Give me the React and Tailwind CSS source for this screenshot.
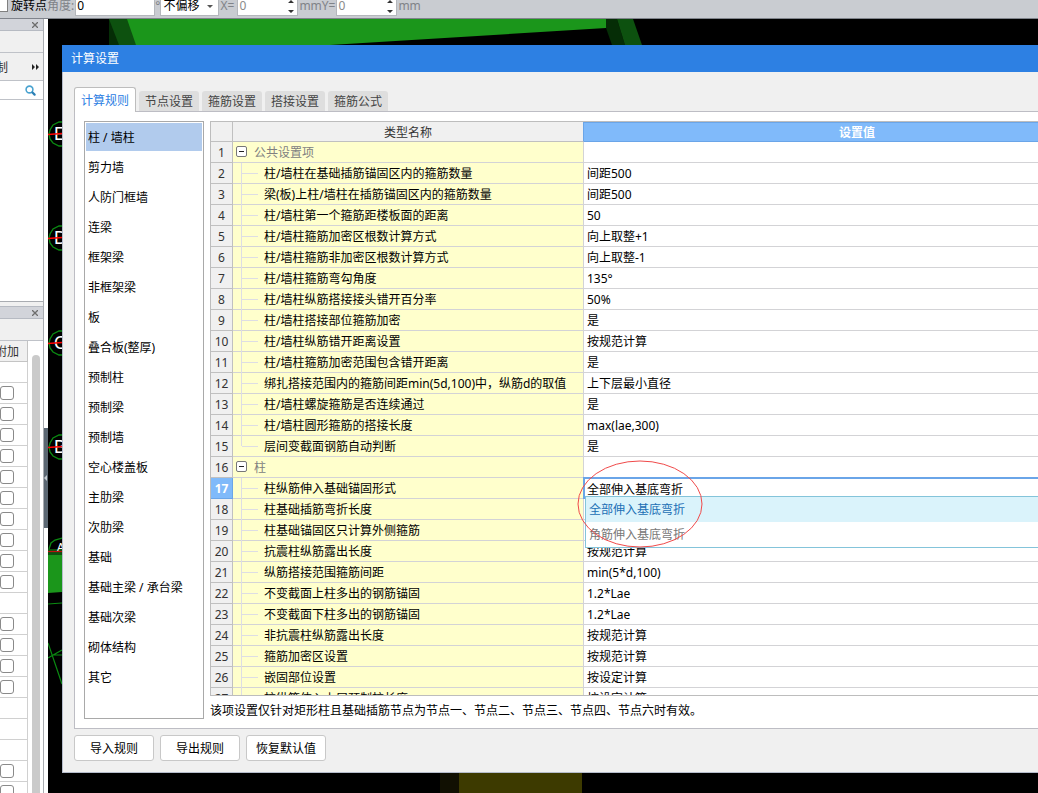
import React from "react";

const tabs = ["计算规则", "节点设置", "箍筋设置", "搭接设置", "箍筋公式"];

const members = [
  "柱 / 墙柱", "剪力墙", "人防门框墙", "连梁", "框架梁", "非框架梁", "板",
  "叠合板(整厚)", "预制柱", "预制梁", "预制墙", "空心楼盖板", "主肋梁", "次肋梁",
  "基础", "基础主梁 / 承台梁", "基础次梁", "砌体结构", "其它",
];

const rows = [
  { group: "公共设置项" },
  { name: "柱/墙柱在基础插筋锚固区内的箍筋数量", value: "间距500" },
  { name: "梁(板)上柱/墙柱在插筋锚固区内的箍筋数量", value: "间距500" },
  { name: "柱/墙柱第一个箍筋距楼板面的距离", value: "50" },
  { name: "柱/墙柱箍筋加密区根数计算方式", value: "向上取整+1" },
  { name: "柱/墙柱箍筋非加密区根数计算方式", value: "向上取整-1" },
  { name: "柱/墙柱箍筋弯勾角度", value: "135°" },
  { name: "柱/墙柱纵筋搭接接头错开百分率", value: "50%" },
  { name: "柱/墙柱搭接部位箍筋加密", value: "是" },
  { name: "柱/墙柱纵筋错开距离设置", value: "按规范计算" },
  { name: "柱/墙柱箍筋加密范围包含错开距离", value: "是" },
  { name: "绑扎搭接范围内的箍筋间距min(5d,100)中，纵筋d的取值", value: "上下层最小直径" },
  { name: "柱/墙柱螺旋箍筋是否连续通过", value: "是" },
  { name: "柱/墙柱圆形箍筋的搭接长度", value: "max(lae,300)" },
  { name: "层间变截面钢筋自动判断", value: "是", last: true },
  { group: "柱" },
  { name: "柱纵筋伸入基础锚固形式", value: "全部伸入基底弯折", editing: true },
  { name: "柱基础插筋弯折长度", value: "" },
  { name: "柱基础锚固区只计算外侧箍筋", value: "" },
  { name: "抗震柱纵筋露出长度", value: "按规范计算" },
  { name: "纵筋搭接范围箍筋间距", value: "min(5*d,100)" },
  { name: "不变截面上柱多出的钢筋锚固", value: "1.2*Lae" },
  { name: "不变截面下柱多出的钢筋锚固", value: "1.2*Lae" },
  { name: "非抗震柱纵筋露出长度", value: "按规范计算" },
  { name: "箍筋加密区设置", value: "按规范计算" },
  { name: "嵌固部位设置", value: "按设定计算" },
  { name: "柱纵筋伸入上层预制柱长度", value: "按设定计算" },
];

const attributeRows = [0, 1, 1, 1, 1, 1, 1, 1, 1, 1, 1, 0, 1, 1, 1, 1, 0, 0, 0, 1, 1];

function Spin({ label }) {
  return (
    <div className="flex h-5 w-[61px] border border-[#b4b7bc] bg-white">
      <input aria-label={label} defaultValue="0" className="w-0 flex-1 px-px text-[#8a8a8a] outline-none" />
      <svg className="h-full w-3" viewBox="0 0 12 18" fill="#333">
        <path d="M3 6h6L6 3zM3 13h6l-3 3z" />
      </svg>
    </div>
  );
}

function Toolbar() {
  return (
    <header className="flex h-[19px] shrink-0 items-end overflow-hidden border-b border-[#7f838b] bg-[#c9ccd1] pb-[2px] leading-5 text-[#808388]">
      <label className="flex items-end text-black">
        <input type="checkbox" className="mr-[3px] mb-1 -ml-[6px] size-[14px] appearance-none border border-[#808080] bg-white" />
        旋转点
      </label>
      <label className="flex items-end">
        角度:
        <input defaultValue="0" className="ml-px h-5 w-20 border border-[#b4b7bc] bg-white px-px text-black outline-none" />
      </label>
      <span>°</span>
      <div className="relative h-5 w-[59px]">
        <select aria-label="偏移方式" className="h-full w-full appearance-none border border-[#b4b7bc] bg-white pl-[2px] leading-[18px] text-black">
          <option>不偏移</option>
        </select>
        <svg className="pointer-events-none absolute top-[9px] right-[5px] h-1 w-[7px]" viewBox="0 0 7 4" fill="#555">
          <path d="M0 0h6L3 3z" />
        </svg>
      </div>
      <span className="w-[18px] pl-px">X=</span>
      <Spin label="X" />
      <span className="w-[38px] pl-px">mmY=</span>
      <Spin label="Y" />
      <span className="pl-px">mm</span>
    </header>
  );
}

function PanelBar({ label }) {
  return (
    <div className="flex h-3 shrink-0 items-center justify-end border-b border-[#b6bac2] bg-[#d2d4da] pr-[5px]">
      <button aria-label={label}>
        <svg className="size-[6px]" viewBox="0 0 6 6" stroke="#6d6d6d" strokeWidth="1.3">
          <path d="M0 0l6 6M6 0L0 6" />
        </svg>
      </button>
    </div>
  );
}

function SidePanels() {
  return (
    <aside className="flex w-12 shrink-0 bg-white">
      <div className="flex w-11 flex-col overflow-hidden border-r border-[#a9acb1] bg-[#f0f0f0]">
        <PanelBar label="关闭构件列表" />
        <div className="h-[22px] shrink-0 border-b border-[#bfc2c8]" />
        <div className="flex h-7 shrink-0 items-center justify-between border-b border-[#bfc2c8] pr-[3px] text-[#333]">
          <button className="-ml-1 pt-[2px]">制</button>
          <button aria-label="更多">
            <svg className="h-[6px] w-2" viewBox="0 0 8 6" fill="#222">
              <path d="M0 0l3 3-3 3zM4 0l3 3-3 3z" />
            </svg>
          </button>
        </div>
        <div className="flex h-[19px] shrink-0 items-center justify-end border-b border-[#bfc2c8] bg-white pr-[7px]">
          <button aria-label="搜索">
            <svg className="size-[11px]" viewBox="0 0 11 11" fill="none" strokeLinecap="round">
              <circle cx="4.5" cy="4.5" r="3.4" stroke="#4aa3d0" strokeWidth="1.6" />
              <path d="M7.5 7.5L9.6 9.6" stroke="#2a7fb5" strokeWidth="2.2" />
            </svg>
          </button>
        </div>
        <div className="h-[202px] shrink-0 border-b border-[#a9acb1] bg-white" />
        <div className="h-[5px] shrink-0 border-b border-[#b6bac2]" />
        <PanelBar label="关闭属性列表" />
        <div className="h-[22px] shrink-0 border-b border-[#bfc2c8]" />
        <div className="flex min-h-0 flex-1 bg-white">
          <table className="h-fit w-7 table-fixed border-separate border-spacing-0">
            <thead>
              <tr>
                <th className="h-[21px] border-r border-b border-[#c4c4c4] bg-[#f0f0f0] p-0 pt-[2px] leading-[18px] font-normal text-[#333]">
                  <div className="flex justify-end overflow-hidden pr-2 whitespace-nowrap">附加</div>
                </th>
              </tr>
            </thead>
            <tbody>
              {attributeRows.map((box, i) => (
                <tr key={i}>
                  <td className="h-[21px] border-r border-b border-[#d0d0d0] p-0">
                    {box ? (
                      <input
                        type="checkbox"
                        aria-label={`附加 ${i + 1}`}
                        className="block size-[14px] appearance-none rounded-[3px] border border-[#8a8a8a] bg-white"
                      />
                    ) : null}
                  </td>
                </tr>
              ))}
            </tbody>
          </table>
          <div className="mt-[14px] ml-1 w-2 rounded-t bg-[#cacaca]" />
        </div>
      </div>
      <button aria-label="收起面板" className="mt-[409px] flex h-[100px] w-1 items-center bg-[#5b6772]">
        <svg className="h-[6px] w-[3px]" viewBox="0 0 3 6" fill="#c5ccd2">
          <path d="M3 0v6L0 3z" />
        </svg>
      </button>
    </aside>
  );
}

function Axis({ y, letter }) {
  return (
    <g>
      <path
        d={`M62 ${y - 12}L59 ${y - 12}L53 ${y - 9}L50 ${y - 4}L49 ${y}L50 ${y + 5}L53 ${y + 9}L59 ${y + 12}L62 ${y + 12}`}
        fill="none"
        stroke="#0b8a12"
        strokeWidth="1.3"
      />
      <text x="54" y={y + 6} fontSize="18" fill="#fff" fontFamily="Liberation Sans, sans-serif">{letter}</text>
      <path d={`M48 ${y + 0.5}L62 ${y - 0.5}`} stroke="#f00" strokeWidth="1.5" />
    </g>
  );
}

function ModelView() {
  return (
    <main className="min-w-0 flex-1 overflow-hidden bg-black">
      <svg width="990" height="774" viewBox="48 19 990 774" aria-hidden="true">
        <path d="M109 19h20v26h-20z" fill="#052d06" />
        <path d="M109 19h19l9 26h-18z" fill="#0d510f" />
        <path d="M127 19h479v9L330 45H136z" fill="#1b961b" />
        <path d="M606 19h11l8 26h-13l-6-17z" fill="#052d06" />
        <path d="M617 19h16l9 26h-17z" fill="#0d510f" />
        <Axis y={134} letter="E" />
        <Axis y={238} letter="D" />
        <Axis y={343} letter="C" />
        <Axis y={447} letter="B" />
        <path d="M48 549h14v6H48z" fill="#0d510f" />
        <path d="M49 549l2-6 4-3 7-2" fill="none" stroke="#0b8a12" strokeWidth="1.3" />
        <text x="57" y="551" fontSize="11" fill="#fff" fontFamily="Liberation Sans, sans-serif">A</text>
        <path d="M48 551.5h14" stroke="#c01010" strokeWidth="1.2" />
        <path d="M48 555h14v37l-14 1z" fill="#1b961b" />
        <path d="M48 604l14-1M48 643l14 41M48 658l14-8M52 655h10" fill="none" stroke="#0b8a12" strokeWidth="1.2" />
        <path d="M440 773h19v20h-19z" fill="#111002" />
        <path d="M459 773h123v20H459z" fill="#3d3a00" />
      </svg>
    </main>
  );
}

function ValueEditor({ value }) {
  return (
    <div className="relative -mt-px -ml-px h-[22px] border-t-2 border-l-2 border-[#6aa5e8] bg-white">
      <input
        role="combobox"
        aria-label="柱纵筋伸入基础锚固形式"
        aria-expanded="true"
        aria-controls="anchor-options"
        defaultValue={value}
        className="block h-[19px] w-full px-[2px] outline-none"
      />
      <ul
        id="anchor-options"
        role="listbox"
        className="absolute top-[17px] right-0 left-0 z-10 border border-[#84c4da] bg-white leading-[25px]"
      >
        <li role="option" aria-selected="true" className="bg-[#daf3fb] pl-[3px] text-[#1a6fb5]">全部伸入基底弯折</li>
        <li role="option" aria-selected="false" className="pl-[3px] text-[#777]">角筋伸入基底弯折</li>
      </ul>
      <svg className="pointer-events-none absolute -top-[19px] -left-[8px] z-20" width="126" height="88" viewBox="0 0 126 88" fill="none" stroke="#f04a4a">
        <ellipse cx="63" cy="44" rx="62" ry="43" />
      </svg>
    </div>
  );
}

function RulesTable() {
  return (
    <div className="min-h-0 flex-1 overflow-hidden border border-[#bdbdbd]">
      <table className="w-full table-fixed border-separate border-spacing-0 leading-[18px]">
        <colgroup>
          <col className="w-[22px]" />
          <col className="w-[351px]" />
          <col />
        </colgroup>
        <thead>
          <tr className="h-5 leading-[17px] text-[#333]">
            <th aria-label="序号" className="border-r border-b border-[#c0c0c0] bg-[#f0f0f0] p-0" />
            <th className="border-r border-b border-r-[#6aa5e8] border-b-[#c0c0c0] bg-[#f0f0f0] p-0 pt-[2px] font-normal">类型名称</th>
            <th className="border-y border-[#6aa5e8] bg-[#80bafa] p-0 pt-[2px] leading-4 font-bold text-white">设置值</th>
          </tr>
        </thead>
        <tbody>
          {rows.map((r, i) => (
            <tr key={i} className="h-[21px]">
              <th
                className={
                  r.editing
                    ? "border-r border-b border-[#6aa5e8] bg-[#80bafa] p-0 pt-[2px] font-bold text-white"
                    : "border-r border-b border-[#c0c0c0] bg-[#f0f0f0] p-0 pt-[2px] font-normal text-[#333]"
                }
              >
                {i + 1}
              </th>
              <td className="border-r border-b border-[#d3d3d6] bg-[#ffffcc] p-0 whitespace-nowrap">
                {r.group ? (
                  <div className="flex h-5 items-center pl-[3px] text-[#808080]">
                    <button aria-label={`折叠 ${r.group}`} className="mb-px flex size-[11px] items-center justify-center rounded-[2px] border border-[#777] bg-white">
                      <span className="h-px w-[5px] bg-[#222]" />
                    </button>
                    <span className="ml-[7px] pt-[2px]">{r.group}</span>
                  </div>
                ) : (
                  <div className="flex h-5 items-center pl-2">
                    <span className={r.last ? "h-[10px] w-px self-start bg-[#dddde4]" : "-mb-px h-[21px] w-px self-start bg-[#dddde4]"} />
                    <span className="h-px w-4 bg-[#dddde4]" />
                    <span className="ml-[6px] pt-[2px]">{r.name}</span>
                  </div>
                )}
              </td>
              <td className={r.editing ? "h-[21px] p-0 align-top" : "border-b border-[#d3d3d6] p-0 pt-[2px] pl-[3px]"}>
                {r.editing ? <ValueEditor value={r.value} /> : r.value}
              </td>
            </tr>
          ))}
        </tbody>
      </table>
    </div>
  );
}

function SettingsDialog() {
  return (
    <section
      role="dialog"
      aria-label="计算设置"
      className="absolute top-[45px] -right-[114px] bottom-5 left-[62px] flex flex-col border-b border-l border-[#b5bccb] bg-[#f0f0f0]"
    >
      <h1 className="-ml-px h-[27px] shrink-0 bg-[#2d80e3] pl-[9px] leading-[27px] text-white">计算设置</h1>
      <div className="flex min-h-0 flex-1 flex-col px-[11px] pt-[15px] pb-[11px]">
        <div role="tablist" className="z-10 -mb-px flex items-end gap-[3px]">
          {tabs.map((t, i) => (
            <button
              key={t}
              role="tab"
              aria-selected={i === 0}
              className={
                i === 0
                  ? "h-[25px] w-[62px] rounded-t-[3px] border border-b-0 border-[#bdbdbd] bg-white pt-[2px] text-[#2d80e3]"
                  : "mb-px h-5 w-[60px] rounded-t-[3px] bg-[#dedede] pt-[2px] text-[#444]"
              }
            >
              {t}
            </button>
          ))}
        </div>
        <div className="flex min-h-0 flex-1 gap-[6px] border border-[#bdbdc4] bg-white px-[9px] pt-[9px] pb-[9px]">
          <nav className="flex w-[120px] shrink-0 flex-col gap-[2px] border border-[#a9a9a9] p-px">
            {members.map((m, i) => (
              <button
                key={m}
                className={i === 0 ? "h-7 shrink-0 bg-[#b1cbed] pt-[2px] pl-[2px] text-left" : "h-7 shrink-0 pt-[2px] pl-[2px] text-left"}
              >
                {m}
              </button>
            ))}
          </nav>
          <div className="flex min-w-0 flex-1 flex-col">
            <RulesTable />
            <p className="h-[23px] shrink-0 pt-1 leading-[22px]">
              该项设置仅针对矩形柱且基础插筋节点为节点一、节点二、节点三、节点四、节点六时有效。
            </p>
          </div>
        </div>
        <div className="mt-[6px] flex gap-[6px]">
          {["导入规则", "导出规则", "恢复默认值"].map((b) => (
            <button key={b} className="h-[26px] w-20 rounded-[3px] border border-[#c8c8c8] bg-white pt-[2px]">{b}</button>
          ))}
        </div>
      </div>
    </section>
  );
}

export default function App() {
  return (
    <div className="relative flex h-screen flex-col overflow-hidden bg-white font-['Noto_Sans','Noto_Sans_CJK_SC',sans-serif] text-[12px] text-black">
      <Toolbar />
      <div className="flex min-h-0 flex-1">
        <SidePanels />
        <ModelView />
      </div>
      <SettingsDialog />
    </div>
  );
}
